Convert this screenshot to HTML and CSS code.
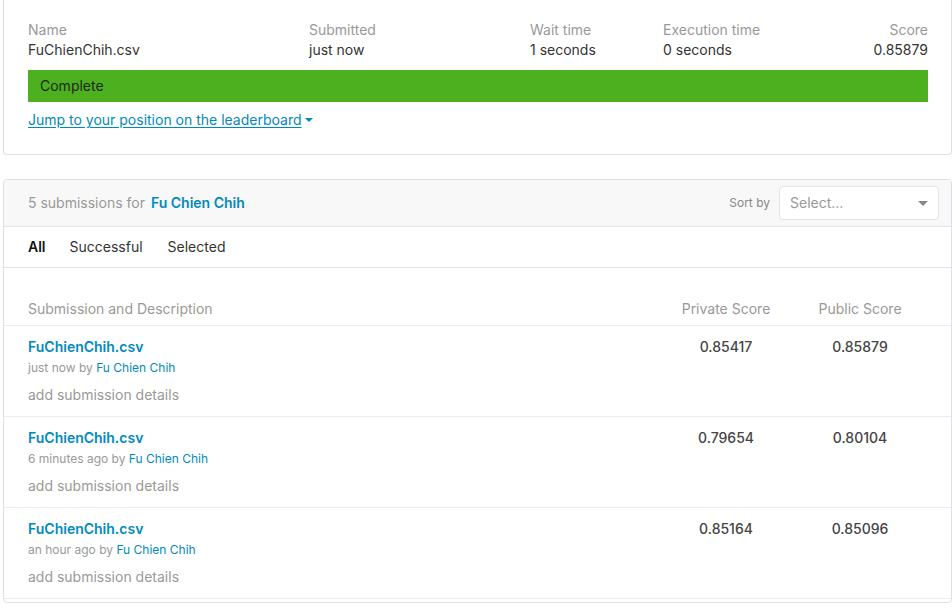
FILE: index.html
```html
<!DOCTYPE html>
<html>
<head>
<meta charset="utf-8">
<link rel="stylesheet" href="styles.css">
</head>
<body>
<div class="page">
  <section class="card result">
    <div class="stats">
      <div class="stat name"><div class="label">Name</div><div class="value">FuChienChih.csv</div></div>
      <div class="stat submitted"><div class="label">Submitted</div><div class="value">just now</div></div>
      <div class="stat wait"><div class="label">Wait time</div><div class="value">1 seconds</div></div>
      <div class="stat exec"><div class="label">Execution time</div><div class="value">0 seconds</div></div>
      <div class="stat score"><div class="label">Score</div><div class="value">0.85879</div></div>
    </div>
    <div class="status">Complete</div>
    <a class="jump" href="#">Jump to your position on the leaderboard<span class="caret"></span></a>
  </section>

  <section class="card subs">
    <header class="subs-head">
      <div class="count">5 submissions for <a href="#" class="user">Fu Chien Chih</a></div>
      <div class="sort">
        <span class="sort-label">Sort by</span>
        <div class="select"><span>Select...</span><span class="sel-caret"></span></div>
      </div>
    </header>
    <nav class="tabs">
      <span class="tab active">All</span>
      <span class="tab">Successful</span>
      <span class="tab">Selected</span>
    </nav>
    <div class="colhead">
      <div>Submission and Description</div>
      <div class="c">Private Score</div>
      <div class="c">Public Score</div>
    </div>
    <div class="row">
      <div class="desc">
        <a class="file" href="#">FuChienChih.csv</a>
        <div class="meta">just now by <a href="#">Fu Chien Chih</a></div>
        <div class="add">add submission details</div>
      </div>
      <div class="sc">0.85417</div>
      <div class="sc">0.85879</div>
    </div>
    <div class="row">
      <div class="desc">
        <a class="file" href="#">FuChienChih.csv</a>
        <div class="meta">6 minutes ago by <a href="#">Fu Chien Chih</a></div>
        <div class="add">add submission details</div>
      </div>
      <div class="sc">0.79654</div>
      <div class="sc">0.80104</div>
    </div>
    <div class="row">
      <div class="desc">
        <a class="file" href="#">FuChienChih.csv</a>
        <div class="meta">an hour ago by <a href="#">Fu Chien Chih</a></div>
        <div class="add">add submission details</div>
      </div>
      <div class="sc">0.85164</div>
      <div class="sc">0.85096</div>
    </div>
    <div class="foot"></div>
  </section>
</div>
</body>
</html>
```
FILE: styles.css
```css
* { box-sizing: border-box; }
html, body { margin: 0; padding: 0; background: #fff; }
body {
  font-family: Inter, "Noto Sans", "Liberation Sans", sans-serif;
  font-size: 14px;
  line-height: 20px;
  color: #3c3c3c;
}
a { text-decoration: none; color: #008abc; }
.page { padding-left: 3px; width: 952px; }
.card {
  width: 949px;
  border: 1px solid #dedfe0;
  border-radius: 4px;
  background: #fff;
}
.result {
  border-top: none;
  border-radius: 0 0 4px 4px;
  padding: 20px 23px 24px 24px;
}
.stats { display: flex; }
.stat .label { color: #999; }
.stat .value { color: #333; }
.name { width: 281px; }
.submitted { width: 221px; }
.wait { width: 133px; }
.exec { flex: 1; }
.score { text-align: right; }
.status {
  margin-top: 10px;
  height: 32px;
  line-height: 32px;
  background: #4db01f;
  color: #1b2a12;
  padding-left: 12px;
}
.jump {
  display: inline-block;
  margin-top: 8px;
  color: #008abc;
  text-decoration: underline;
  text-underline-offset: 2px;
}
.caret {
  display: inline-block;
  width: 0; height: 0;
  margin-left: 3px;
  vertical-align: 3px;
  border-left: 4px solid transparent;
  border-right: 4px solid transparent;
  border-top: 4px solid #008abc;
}
.subs { margin-top: 24px; overflow: hidden; }
.subs-head {
  height: 47px;
  background: #f8f8f8;
  border-bottom: 1px solid #e4e4e4;
  display: flex;
  align-items: center;
  justify-content: space-between;
  padding: 0 12px 0 24px;
}
.count { color: #999; }
.user { font-weight: 600; margin-left: 2px; }
.sort { display: flex; align-items: center; }
.sort-label { font-size: 12px; color: #888; margin-right: 9px; }
.select {
  width: 160px;
  height: 34px;
  background: #fff;
  border: 1px solid #e4e4e4;
  border-radius: 4px;
  display: flex;
  align-items: center;
  justify-content: space-between;
  padding: 0 10px 0 10px;
  color: #999;
}
.sel-caret {
  width: 0; height: 0;
  border-left: 5px solid transparent;
  border-right: 5px solid transparent;
  border-top: 5px solid #888;
}
.tabs {
  height: 41px;
  border-bottom: 1px solid #e4e4e4;
  display: flex;
  align-items: center;
  padding-left: 24px;
}
.tab { color: #333; margin-right: 25px; }
.tab.active { color: #111; font-weight: 600; margin-right: 24px; }
.colhead {
  display: grid;
  grid-template-columns: 1fr 134px 134px;
  padding: 31px 24px 6px 24px;
  color: #999;
}
.c { text-align: center; }
.row {
  display: grid;
  grid-template-columns: 1fr 134px 134px;
  border-top: 1px solid #ebebeb;
  padding: 11px 24px 11px 24px;
}
.file { display: block; font-weight: 600; }
.meta { font-size: 12px; line-height: 18px; margin-top: 2px; color: #999; }
.add { margin-top: 8px; color: #999; }
.sc { text-align: center; color: #444; font-weight: 500; }
.foot { border-top: 1px solid #ebebeb; height: 4px; }
```
